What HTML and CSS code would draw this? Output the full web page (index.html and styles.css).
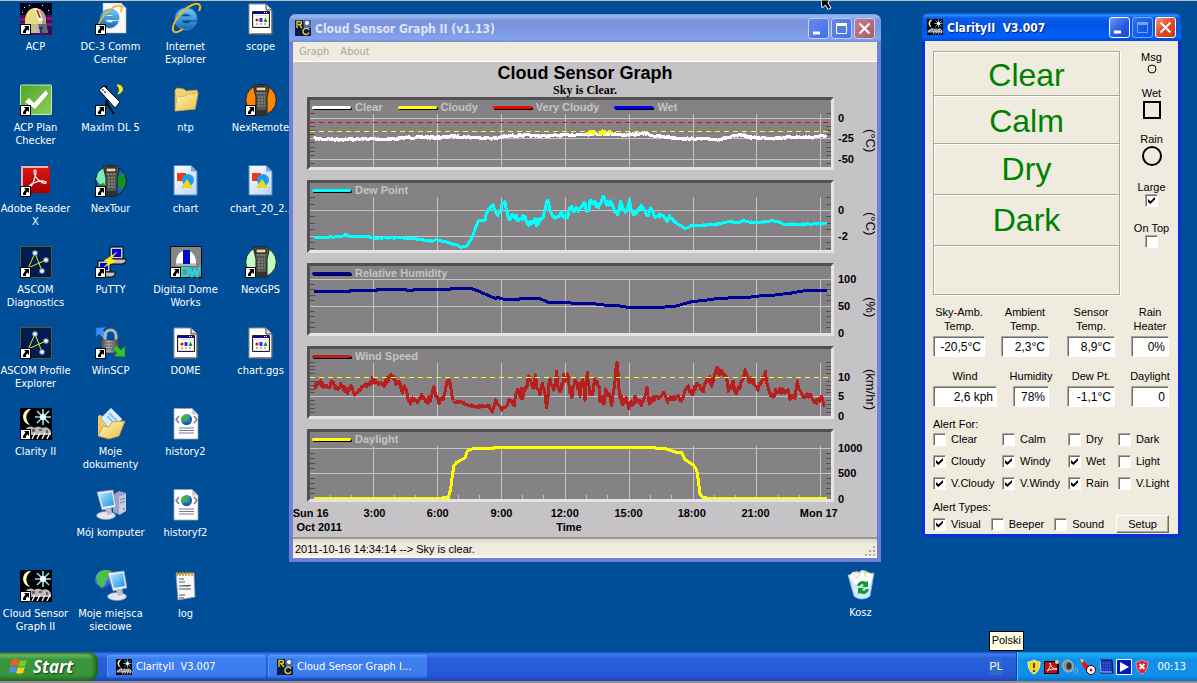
FILE: index.html
```html
<!DOCTYPE html>
<html lang="pl">
<head>
    <meta charset="UTF-8">
    <meta name="viewport" content="width=device-width, initial-scale=1.0">
    <title>Cloud Sensor Desktop</title>
    <link rel="stylesheet" href="styles.css">
</head>
<body>

<!-- Icon library -->
<svg class="defs" width="0" height="0" aria-hidden="true">
    <defs>
        <linearGradient id="gGreen" x1="0" y1="0" x2="1" y2="1"><stop offset="0" stop-color="#4ea52c"/><stop offset="1" stop-color="#8fcf5a"/></linearGradient>
        <linearGradient id="gRed" x1="0" y1="0" x2="0" y2="1"><stop offset="0" stop-color="#e01818"/><stop offset="1" stop-color="#a80000"/></linearGradient>
        <linearGradient id="gFolder" x1="0" y1="0" x2="1" y2="1"><stop offset="0" stop-color="#fff6b8"/><stop offset="1" stop-color="#e8bf48"/></linearGradient>
        <linearGradient id="gPage" x1="0" y1="0" x2="1" y2="1"><stop offset="0" stop-color="#ffffff"/><stop offset="1" stop-color="#b8d4f8"/></linearGradient>
        <linearGradient id="gScreen" x1="0" y1="0" x2="1" y2="1"><stop offset="0" stop-color="#b8ecff"/><stop offset="1" stop-color="#1c8ee8"/></linearGradient>
        <linearGradient id="gSteel" x1="0" y1="0" x2="1" y2="0"><stop offset="0" stop-color="#444"/><stop offset=".4" stop-color="#aaa"/><stop offset="1" stop-color="#444"/></linearGradient>
        <radialGradient id="gGlobe" cx=".35" cy=".3" r=".8"><stop offset="0" stop-color="#9fe0ff"/><stop offset=".5" stop-color="#2a78e0"/><stop offset="1" stop-color="#0a2a90"/></radialGradient>
        <linearGradient id="gIe" x1="0" y1="0" x2="0" y2="1"><stop offset="0" stop-color="#6fd0f8"/><stop offset="1" stop-color="#1464b8"/></linearGradient>
    </defs>

    <symbol id="arrow" viewBox="0 0 11 11">
        <rect x=".5" y=".5" width="10" height="10" fill="#fff" stroke="#000"/>
        <path d="M4 2h5v5L7.500 5.500 6 7v2H3V7l2.500-3.500z" fill="#000"/>
    </symbol>
    <symbol id="acp" viewBox="0 0 32 32">
        <path fill="#000018" d="M0 0h32v32H0z"/><path fill="#4a1060" d="M0 12h32v9H0z"/><path fill="#8c1868" d="M0 15h5v3H0zM27 14h5v3h-5zM0 20h7v3H0zM25 20h7v3h-7z"/>
        <path fill="#18186a" d="M0 23h32v5H0z"/><path fill="#500848" d="M0 28h32v4H0z"/>
        <path d="M5 18C5 9 10 5 15 5s11 4 11 13v3H5z" fill="#e8dc80"/><path d="M19 6c5 2 7 6 7 15h-4c0-7-1-11-3-15z" fill="#a8a49c"/>
        <path d="M14 5l4 1 5 11-4 2z" fill="#fff"/><path d="M16 7h2l3 8h-2z" fill="#e02020"/>
        <path d="M7 21h19l2 9H8z" fill="#c8bc94"/><path d="M18 21h8l2 9h-8z" fill="#6c6870"/><path d="M19 24h4v2h-1v5h-2v-5h-1z" fill="#2030a0"/>
        <path fill="#fff" d="M4 4h1v1H4zM9 2h1v1H9zM22 2h1v1h-1zM28 7h1v1h-1zM2 9h1v1H2z"/>
    </symbol>
    <symbol id="ie" viewBox="0 0 32 32">
        <path d="M16 5a11 11 0 1 0 10.500 14h-6a5.500 5.500 0 0 1-9.500-2h16C27.500 9 22 5 16 5zm-5 8.500C12 10 20 10 21 13.500z" fill="url(#gIe)" stroke="#3a8cd0" stroke-width="1"/>
        <path d="M5 29C-2 27 9 8 22 2c7-3 10 0 7 6" fill="none" stroke="#f2b624" stroke-width="2"/>
        <path d="M5 29c2 1 5-1 8-3" fill="none" stroke="#f2b624" stroke-width="2"/>
    </symbol>
    <symbol id="ie-page" viewBox="0 0 32 32">
        <path d="M8 0h18l5 5v25H8z" fill="#f8f8f8" stroke="#b0b8c4" stroke-width=".6"/><path d="M26 0v5h5z" fill="#c8d0dc"/>
        <g transform="translate(1 2) scale(.85)"><use href="#ie" width="32" height="32"/></g>
    </symbol>
    <symbol id="config" viewBox="0 0 32 32">
        <path d="M4 1h17l6 6v24H4z" fill="#fff" stroke="#8c8c94"/><path d="M21 1v6h6" fill="#dde" stroke="#444"/><path d="M27 7v24H5" fill="none" stroke="#555"/>
        <path d="M7.500 8.500h17v16h-17z" fill="#fff" stroke="#222"/><path fill="#e4e0d4" d="M8 12h16v12H8z"/><path fill="#fff" d="M9 13h14v10H9z"/><path fill="#0a0a8c" d="M8 9h16v2H8z"/><path fill="#fff" d="M19 9h1v1h-1zM21 9h1v1h-1z"/>
        <circle cx="12" cy="17" r="1.600" fill="#d81818"/><path d="M14.500 15h3v4h-3z" fill="#2038c8"/><path d="M20.500 14.500l2 4.500h-4z" fill="#18902c"/><path d="M11 21h2M15 21h2M19 21h2" stroke="#666"/>
    </symbol>
    <symbol id="check" viewBox="0 0 32 32">
        <rect x=".5" y="1" width="31" height="29.500" rx="1" fill="url(#gGreen)" stroke="#c8eaa8"/>
        <path d="M5 18l4-4 5 5L26 6l2 4-13 15z" fill="#fff"/>
    </symbol>
    <symbol id="telescope" viewBox="0 0 32 32">
        <path d="M12 16l-1 5-5 5M11 18l8 12M12 2l-4 4" stroke="#000" stroke-width="2" fill="none"/>
        <path d="M4 6l5-4 16 16-5 6z" fill="#fff" stroke="#000" stroke-width="1"/><path d="M7 6h2M9 8h2" stroke="#000"/>
        <path d="M22 1c6-1 8 7 1 9 2-3 2-6-1-9z" fill="#ffee00" stroke="#ffee00"/>
    </symbol>
    <symbol id="folder" viewBox="0 0 32 32">
        <path d="M5 27V6l2-2 7 1 2 2 11-1 1 3-3 16z" fill="#f2d370" stroke="#b8963c" stroke-width=".8"/>
        <path d="M5 27l2-14 9-1 2-2 10-1-3 16z" fill="url(#gFolder)" stroke="#c8a040" stroke-width=".6"/>
    </symbol>
    <symbol id="handset" viewBox="0 0 32 32">
        <path d="M9 1h14l1 4-2 8v18H11V13L9 5z" fill="#555850" stroke="#1c1c1c"/>
        <path d="M11 3h10v4H11z" fill="#e8d0a8" stroke="#111"/><path d="M12 9h2M15 9h2M18 9h2M13 13h2M16 13h2M19 13h1M13 16h2M16 16h2M19 16h1M13 19h2M16 19h2M19 19h1M13 22h2M16 22h2M19 22h1" stroke="#a4a8a0" stroke-width="1"/><path d="M11 26h11v5H11z" fill="#30322e"/>
    </symbol>
    <symbol id="nexremote" viewBox="0 0 32 32"><circle cx="16" cy="16" r="15.300" fill="#ff8400" stroke="#20242c"/><use href="#handset" width="32" height="32"/></symbol>
    <symbol id="nexgps" viewBox="0 0 32 32"><circle cx="16" cy="16" r="15.300" fill="#c4fac4" stroke="#203020"/><use href="#handset" width="32" height="32"/></symbol>
    <symbol id="nextour" viewBox="0 0 32 32">
        <circle cx="16" cy="16" r="15.300" fill="#2058e0" stroke="#082020"/><path d="M3 8c4-6 16-8 21-5l-5 8-6 13-8-4-4-6z" fill="#7cecb0"/><path d="M9 2l8-1 6 3-4 5-8-1zM23 10l6-2 2 9-4 9-5-7zM3 20l6-2 3 8-3 2z" fill="#0c9420"/>
        <use href="#handset" width="32" height="32"/>
    </symbol>
    <symbol id="acrobat" viewBox="0 0 32 32">
        <path d="M1 1h29v27H1z" fill="url(#gRed)"/><path d="M1 1h27v2H3v24H1z" fill="#f0b0b0"/>
        <path d="M15 5c2 0 1 4 0 7-1 4-3 9-5 10-2 0 0-3 4-4 4-2 9-3 12-1 1 2-3 2-6-1-3-2-6-6-6-9 0-1 0-2 1-2z" fill="none" stroke="#fff" stroke-width="1.200"/>
    </symbol>
    <symbol id="shapes" viewBox="0 0 32 32">
        <path d="M4 .5h17l6 6V30H4z" fill="url(#gPage)" stroke="#5c84bc"/><path d="M21 .5v6h6z" fill="#78a8e0"/>
        <path d="M7 8h9v8H7z" fill="#f03818"/><circle cx="18" cy="15" r="6" fill="#1c9cf0"/><path d="M17 14l6 9H11z" fill="#e8d820"/>
    </symbol>
    <symbol id="ascom" viewBox="0 0 32 32">
        <path d="M.5.5h31v31H.500z" fill="#001c50" stroke="#5c5818"/><path d="M15 7L7 25M15 7l7 18M26 14L8 22" stroke="#f0e818" stroke-width="1"/>
        <g fill="#7890c0"><circle cx="15" cy="7" r="2.800"/><circle cx="26" cy="14" r="2.800"/><circle cx="22" cy="25" r="2.800"/></g><g fill="#fff"><circle cx="15" cy="7" r="1.800"/><circle cx="26" cy="14" r="1.800"/><circle cx="22" cy="25" r="1.800"/></g>
    </symbol>
    <symbol id="putty" viewBox="0 0 32 32">
        <path d="M15 1h13v12H15z" fill="#d0d0d0" stroke="#000"/><path d="M17 3h9v8h-9z" fill="#0000d8"/><path d="M13 15l4-2h14v3l-4 2H13z" fill="#c0c0c0" stroke="#000"/>
        <path d="M3 15h12v11H3z" fill="#d0d0d0" stroke="#000"/><path d="M5 17h8v7H5z" fill="#0000d8"/><path d="M4 28l4-2h12v3l-3 2H4z" fill="#c0c0c0" stroke="#000"/>
        <path d="M22 6L9 15l5 1-5 5 12-6-5-2z" fill="#ffee00" stroke="#ffee00" stroke-width=".5"/>
    </symbol>
    <symbol id="ddw" viewBox="0 0 32 32">
        <path d="M.5.5h31v31H.500z" fill="#868686" stroke="#111"/><path d="M6 18C5 0 27 0 26 18z" fill="#fff"/><path d="M13 4h7v14h-7z" fill="#0008d0"/><path d="M5 18h22v2H5z" fill="#ddd" stroke="#333" stroke-width=".5"/>
        <path d="M12 22v8h3c5 0 5-8 0-8zM20 21l2 9 3-7 2 7 3-9" fill="none" stroke="#00e8f0" stroke-width="1.800"/>
    </symbol>
    <symbol id="winscp" viewBox="0 0 32 32">
        <path d="M1 1l10-1-3 3 5 5-4 4-5-5-3 3z" fill="#3c90f8" stroke="#1c58c0" stroke-width=".6"/>
        <path d="M10 14V9c0-8 11-8 11 0v5" fill="none" stroke="#b4b4b4" stroke-width="3"/><path d="M6 13h18v11l-3 2H9l-3-2z" fill="url(#gSteel)" stroke="#333" stroke-width=".6"/><path d="M8 16h14M8 19h14M8 22h14" stroke="#555" stroke-width=".7"/>
        <path d="M30 30l-11-1 3-3-4-4 3-4 5 5 4-4z" fill="#38c030" stroke="#148018" stroke-width=".6"/>
    </symbol>
    <symbol id="clarity" viewBox="0 0 32 32">
        <path d="M0 0h32v32H0z" fill="#000"/><path d="M9 1C1 3 1 15 10 17 5 12 5 6 11 1z" fill="#fff8c0"/>
        <path d="M23 1v16M15 9h16M17 3l12 12M29 3L17 15" stroke="#90dcf4" stroke-width="1.600"/><circle cx="23" cy="9" r="3" fill="#fff"/>
        <path d="M1 27c0-5 3-5 5-6 2-3 6-3 8-1 3-2 6-1 8 0 4-2 8 0 9 4v3z" fill="#b8b8b8"/><path d="M12 21h3v3h-3zM19 21h3v2h-3zM7 23h3v2H7zM26 22h2v3h-2z" fill="#666"/>
        <path d="M15 25l-3 6M20 25l-3 6M25 25l-3 6M30 25l-3 6" stroke="#fff" stroke-width="1.300"/>
    </symbol>
    <symbol id="docs" viewBox="0 0 32 32">
        <path d="M3 28V8l2-1 5 2 16 8-2 11z" fill="#f0c860"/><path d="M6 10L16 0l11 11-10 13z" fill="#d8f0ff" stroke="#78b0e0" stroke-width=".8"/><path d="M12 8l8 8M14 5l9 9" stroke="#8cc4f0" stroke-width="2"/>
        <path d="M3 28l5-10 6 1 3-5 13-1-6 15-10 3z" fill="url(#gFolder)" stroke="#c8942c" stroke-width=".8"/>
    </symbol>
    <symbol id="html" viewBox="0 0 32 32">
        <path d="M4 .5h18l6 6V31H4z" fill="#fff" stroke="#a0a0a8" stroke-width=".8"/><path d="M22 .5v6h6z" fill="#ccd"/>
        <path d="M9 8l-3 3.500L9 15M24 8l3 3.500-3 3.500" fill="none" stroke="#777" stroke-width="1.300"/><circle cx="16.500" cy="11.500" r="5.500" fill="url(#gGlobe)"/><path d="M13 8l4-2 2 3-2 3-3 1-1 2-2-4zM19 13l2-1-2 4z" fill="#3cb43c"/>
        <path d="M9 20h15M9 22.500h15M9 25h15" stroke="#76769c" stroke-width="1.200"/>
    </symbol>
    <symbol id="monitor" viewBox="0 0 32 32">
        <path d="M2 3l16-2 3 17-14 3z" fill="#f0f0f8" stroke="#8890b0" stroke-width=".7"/><path d="M4 5l13-2 2 13-11 2z" fill="url(#gScreen)"/>
        <path d="M10 20l6-1 1 5h-6z" fill="#a8acc8"/><ellipse cx="11" cy="26.500" rx="9.500" ry="4" fill="#e4e4f0" stroke="#9094b0" stroke-width=".6"/><path d="M11 20l5-1 1 6-5 1z" fill="#b8bcd4"/>
    </symbol>
    <symbol id="computer" viewBox="0 0 32 32">
        <path d="M18 6l6-4 7 2v18l-6 4-7-3z" fill="#9ca4cc"/><path d="M24 8l7-3v17l-7 3z" fill="#c8cce4"/><path d="M25 11l5-2M25 14l5-2" stroke="#6c74a4"/><circle cx="29" cy="20" r="1" fill="#38c838"/>
        <use href="#monitor" width="32" height="32"/>
    </symbol>
    <symbol id="network" viewBox="0 0 32 32">
        <circle cx="10" cy="10" r="10" fill="url(#gGlobe)"/><path d="M2 6c4-7 12-7 15-4l-4 6-4 1 2 5-4 4-5-5z" fill="#50c040"/>
        <g transform="translate(11 0)"><use href="#monitor" width="32" height="32"/></g>
    </symbol>
    <symbol id="notepad" viewBox="0 0 32 32">
        <path d="M6 4l18-1 1 24-17 3z" fill="#f8f8fc" stroke="#90949c" stroke-width=".8"/><path d="M7 2v4M10 2v4M13 2v4M16 2v4M19 2v4M22 2v4" stroke="#c89418" stroke-width="1.600"/>
        <path d="M9 9h5M9 12h6M9 16h10l2-1M9 19h12M9 25h6M9 28h5" stroke="#555" stroke-width="1"/>
    </symbol>
    <symbol id="bin" viewBox="0 0 32 32">
        <path d="M3 6l26-2-4 23c-4 4-12 4-16 0z" fill="#d4eafc" stroke="#88b8dc" stroke-width=".8"/><path d="M4 7l4-4 5 1 4-3 8 3 3 2-3 9-14 1z" fill="#fff"/><path d="M7 3l5 6 6-8 3 7" fill="none" stroke="#c8d0dc"/><path d="M8 3l5-1 1 3zM20 1l4 3-5 1z" fill="#f0d878"/>
        <path d="M12 17c1-5 6-6 9-4l2-1v6h-6l2-2c-2-1-3-1-4 1zM24 20c-1 5-6 6-9 4l-2 1v-6h6l-2 2c2 1 3 1 4-1z" fill="#109c28"/>
    </symbol>
    <symbol id="rc" viewBox="0 0 16 16">
        <path d="M0 0h16v16H0z" fill="#081c48"/><path d="M8 0h8v8H9z" fill="#486ca8"/><circle cx="12" cy="3" r="2" fill="#fff"/>
        <path d="M2 8V1.500h3c2 0 2 3 0 3H3M4.500 5L7 8" fill="none" stroke="#f0c820" stroke-width="1.400"/><path d="M14 10c-1-3-6-2-6 1.500s5 4 6 1" fill="none" stroke="#f0c820" stroke-width="1.400"/>
    </symbol>
    <symbol id="flag" viewBox="0 0 20 18">
        <path d="M3 2c3-2 5-1 7 0L8 8C6 7 4 7 1 8z" fill="#f05c28"/><path d="M11 2c2 1 4 1 7 0l-2 6c-3 1-5 1-7 0z" fill="#78c828"/><path d="M1 9c3-1 5-1 7 0l-2 6c-2-1-4-1-6 0z" fill="#4890f0"/><path d="M9 9c2 1 4 1 7 0l-2 6c-3 1-5 1-7 0z" fill="#f8cc28"/>
    </symbol>
    <symbol id="shield-warn" viewBox="0 0 16 16"><path d="M8 1c2 1 4 2 6 2 0 6-2 10-6 12C4 13 2 9 2 3c2 0 4-1 6-2z" fill="#f4d428" stroke="#f8f0b0"/><path d="M8 4v5M8 11v2" stroke="#222" stroke-width="1.500"/></symbol>
    <symbol id="shield-err" viewBox="0 0 16 16"><path d="M8 1c2 1 4 2 6 2 0 6-2 10-6 12C4 13 2 9 2 3c2 0 4-1 6-2z" fill="#d82030" stroke="#d8a0a8"/><path d="M5.500 5l5 5m0-5l-5 5" stroke="#fff" stroke-width="2"/></symbol>
    <symbol id="updater" viewBox="0 0 16 16"><path d="M0 2h15v13H0z" fill="#1c0000"/><path d="M1 3h12v11H1z" fill="#c01010"/><path d="M3 12c3-3 4-6 3-8 1 4 3 6 7 6-4 0-7 0-10 2z" fill="none" stroke="#fff"/><circle cx="13" cy="3" r="2" fill="#f0c8a0"/></symbol>
    <symbol id="speaker" viewBox="0 0 16 16"><ellipse cx="6" cy="7" rx="5" ry="6" fill="#888c94" stroke="#bbb" transform="rotate(-20 6 7)"/><ellipse cx="7" cy="7" rx="2.500" ry="3.500" fill="#333"/><path d="M11 13c2-1 3-3 3-5M13 15c2-1 3-3 3-6" fill="none" stroke="#8cb4f0"/></symbol>
    <symbol id="pointer" viewBox="0 0 16 16"><path d="M0 0l10 7-5 4z" fill="#e01020"/><path d="M0 0l4 1-2 3z" fill="#f8e020"/><circle cx="11" cy="11" r="4.500" fill="#fff" stroke="#200"/><circle cx="11" cy="11" r="1.500" fill="#e01020"/></symbol>
    <symbol id="chip" viewBox="0 0 16 16"><path d="M2 1h12l1 13H3z" fill="#1838c0" stroke="#000c40"/><path d="M2 1l1 12h11" fill="none" stroke="#b0c8ff"/><path d="M5 4h7M5 7h7M5 10h7" stroke="#5878e8" stroke-dasharray="1 1"/></symbol>
    <symbol id="play" viewBox="0 0 16 16"><path d="M.5.5h15v15H.500z" fill="#0018c0" stroke="#fff"/><path d="M4 3l9 5-9 5z" fill="#fff"/></symbol>
</svg>

<main class="desktop">
    <div class="icons" id="icons"></div>

    <!-- Recycle bin -->
    <a class="icon bin" href="#kosz"><svg class="glyph"><use href="#bin"/></svg><span>Kosz</span></a>

    <!-- Cloud Sensor Graph window -->
    <section class="window inactive graph-window">
        <header class="titlebar">
            <svg class="small-icon"><use href="#rc"/></svg>
            <h1>Cloud Sensor Graph II (v1.13)</h1>
            <button class="win-btn" aria-label="Minimize"><svg viewBox="0 0 19 19"><path d="M4 14h7" stroke-width="3"/></svg></button>
            <button class="win-btn" aria-label="Maximize"><svg viewBox="0 0 19 19"><path d="M4.500 5h10v9.500h-10z"/><path d="M4 5.500h11" stroke-width="3"/></svg></button>
            <button class="win-btn close" aria-label="Close"><svg viewBox="0 0 19 19"><path d="M4.500 4.500l10 10m0-10l-10 10" stroke-width="2"/></svg></button>
        </header>
        <nav class="menu"><a href="#graph">Graph</a><a href="#about">About</a></nav>
        <div class="graph">
            <h2>Cloud Sensor Graph</h2>
            <p class="subtitle">Sky is Clear.</p>
            <div class="charts" id="charts"></div>
            <svg class="time-axis" id="timeAxis"></svg>
        </div>
        <footer class="status">
            <span>2011-10-16 14:34:14 --&gt; Sky is clear.</span>
            <svg class="grip" width="12" height="12"><path d="M8 0h2v2H8zM4 4h2v2H4zM8 4h2v2H8zM0 8h2v2H0zM4 8h2v2H4zM8 8h2v2H8z" fill="#b0a898"/></svg>
        </footer>
    </section>

    <!-- Clarity II window -->
    <section class="window clarity-window">
        <header class="titlebar">
            <svg class="small-icon"><use href="#clarity"/></svg>
            <h1>ClarityII&nbsp; V3.007</h1>
            <button class="win-btn" aria-label="Minimize"><svg viewBox="0 0 19 19"><path d="M4 14h7" stroke-width="3"/></svg></button>
            <button class="win-btn" aria-label="Maximize" disabled><svg viewBox="0 0 19 19"><path d="M4.500 5h10v9.500h-10z"/><path d="M4 5.500h11" stroke-width="3"/></svg></button>
            <button class="win-btn close" aria-label="Close"><svg viewBox="0 0 19 19"><path d="M4.500 4.500l10 10m0-10l-10 10" stroke-width="2"/></svg></button>
        </header>
        <div class="clarity">
            <div class="top">
                <ul class="conditions">
                    <li>Clear</li>
                    <li>Calm</li>
                    <li>Dry</li>
                    <li>Dark</li>
                    <li></li>
                </ul>
                <div class="lamps">
                    <div class="lamp">Msg<svg width="10" height="10"><circle cx="5" cy="5" r="4" stroke-width="1"/></svg></div>
                    <div class="lamp">Wet<svg width="20" height="20"><path d="M2 2h16v16H2z"/></svg></div>
                    <div class="lamp">Rain<svg width="20" height="20"><circle cx="10" cy="10" r="9"/></svg></div>
                    <label class="lamp">Large<input type="checkbox" checked></label>
                    <label class="lamp">On Top<input type="checkbox"></label>
                </div>
            </div>

            <div class="readings">
                <label class="w52">Sky-Amb.<br>Temp.<input type="text" value="-20,5°C" readonly></label>
                <label class="w48">Ambient<br>Temp.<input type="text" value="2,3°C" readonly></label>
                <label class="w48">Sensor<br>Temp.<input type="text" value="8,9°C" readonly></label>
                <label class="w38">Rain<br>Heater<input type="text" value="0%" readonly></label>
                <label class="w64">Wind<input type="text" value="2,6 kph" readonly></label>
                <label class="w36">Humidity<input type="text" value="78%" readonly></label>
                <label class="w48">Dew Pt.<input type="text" value="-1,1°C" readonly></label>
                <label class="w38">Daylight<input type="text" value="0" readonly></label>
            </div>

            <fieldset>
                <legend>Alert For:</legend>
                <div class="alerts">
                    <label><input type="checkbox">Clear</label>
                    <label><input type="checkbox">Calm</label>
                    <label><input type="checkbox">Dry</label>
                    <label><input type="checkbox">Dark</label>
                    <label><input type="checkbox" checked>Cloudy</label>
                    <label><input type="checkbox" checked>Windy</label>
                    <label><input type="checkbox" checked>Wet</label>
                    <label><input type="checkbox">Light</label>
                    <label><input type="checkbox" checked>V.Cloudy</label>
                    <label><input type="checkbox" checked>V.Windy</label>
                    <label><input type="checkbox" checked>Rain</label>
                    <label><input type="checkbox">V.Light</label>
                </div>
            </fieldset>

            <fieldset>
                <legend>Alert Types:</legend>
                <div class="types">
                    <label><input type="checkbox" checked>Visual</label>
                    <label><input type="checkbox">Beeper</label>
                    <label><input type="checkbox">Sound</label>
                    <button class="setup">Setup</button>
                </div>
            </fieldset>
        </div>
    </section>

    <div class="tooltip">Polski</div>
</main>

<footer class="taskbar">
    <button class="start"><svg width="20" height="18"><use href="#flag"/></svg>Start</button>
    <div class="tasks">
        <button class="task"><svg class="small-icon"><use href="#clarity"/></svg>ClarityII&nbsp; V3.007</button>
        <button class="task"><svg class="small-icon"><use href="#rc"/></svg>Cloud Sensor Graph I...</button>
    </div>
    <button class="lang">PL</button>
    <div class="tray">
        <svg class="small-icon"><use href="#shield-warn"/></svg>
        <svg class="small-icon"><use href="#updater"/></svg>
        <svg class="small-icon"><use href="#speaker"/></svg>
        <svg class="small-icon"><use href="#pointer"/></svg>
        <svg class="small-icon"><use href="#chip"/></svg>
        <svg class="small-icon"><use href="#play"/></svg>
        <svg class="small-icon"><use href="#shield-err"/></svg>
        <time>00:13</time>
    </div>
</footer>

<svg class="cursor" width="12" height="10" viewBox="0 0 12 10"><path d="M0 0h8.500L7 3l3 5-3 1.500L4.500 5 1 8z" fill="#000" stroke="#fff"/></svg>

<script src="script.js"></script>
</body>
</html>
```

FILE: styles.css
```css
* { margin: 0; padding: 0; box-sizing: border-box; }
body { display: flex; flex-direction: column; min-height: 100vh; background: #004e98; border-top: 1px solid #c0c0c0; border-bottom: 2px solid #919191; overflow: hidden; font: 11px/13px "DejaVu Sans Condensed", "DejaVu Sans", sans-serif; color: #000; }
button, input { font: inherit; color: inherit; }
a { color: inherit; text-decoration: none; }
.defs { position: absolute; }
.small-icon { width: 16px; height: 16px; flex: none; }
.cursor { position: absolute; left: 821px; top: 0; }

/* Desktop */
.desktop { flex: 1; position: relative; }
.icons { display: grid; grid-auto-flow: column; grid-template-rows: repeat(8, 81px); grid-auto-columns: 75px; justify-content: start; padding-top: 2px; margin-left: -2px; }
.icon { display: flex; flex-direction: column; align-items: center; gap: 5px; width: 75px; color: #fff; text-align: center; }
.icon.last-row { grid-row: 8; }
.icon.nowrap { white-space: nowrap; }
.glyph { width: 32px; height: 32px; flex: none; }
.bin { position: absolute; left: 823px; top: 568px; }
.tooltip { position: absolute; right: 173px; bottom: 1px; padding: 2px 2px 3px; border: 1px solid #000; background: #ffffe1; font: 11px/13px "Liberation Sans", Arial, sans-serif; }

/* Windows */
.window { position: absolute; border-radius: 7px 7px 0 0; background: #0831d9; padding: 0 3px 3px; }
.titlebar { display: flex; align-items: center; gap: 2px; height: 28px; margin: 0 -3px; padding: 0 5px; border-radius: 7px 7px 0 0; background: linear-gradient(#0a50d8, #2c8cff 8%, #0a5be8 18%, #0054e3 50%, #0062ff 85%, #0046d0); color: #fff; text-shadow: 1px 1px #0a1883; }
.titlebar h1 { flex: 1; padding: 1px 0 0 2px; font: bold 12px/16px "DejaVu Sans Condensed", "DejaVu Sans", sans-serif; white-space: nowrap; }
.win-btn { width: 21px; height: 21px; border: 1px solid #fff; border-radius: 3px; background: linear-gradient(135deg, #6c96f4, #2458e0 60%, #1c4cd0); }
.win-btn svg { display: block; width: 19px; height: 19px; fill: none; stroke: #fff; }
.win-btn:disabled { opacity: .45; }
.win-btn.close { background: linear-gradient(135deg, #f0987c, #e04c24 50%, #c43c10); }
.inactive { background: #7080d8; padding: 0 4px 4px; }
.inactive .titlebar { margin: 0 -4px; padding: 0 6px; background: linear-gradient(#7c98e0, #9cb8f0 8%, #7a94dc 22%, #7b97e0 55%, #84a4ec 88%, #7690d8); color: #dce4f8; text-shadow: none; }
.inactive .win-btn { border-color: #c0d0f8; background: linear-gradient(135deg, #6888e8, #4470e8); }
.inactive .win-btn.close { background: linear-gradient(135deg, #c08090, #b05860); }

/* Graph window */
.graph-window { left: 289px; top: 13px; width: 592px; }
.menu { display: flex; gap: 11px; height: 20px; padding: 3px 6px; background: #efebde; border-bottom: 1px solid #fff; color: #aca899; }
.graph { overflow: hidden; background: #c6c3c6; font-family: "Liberation Sans", Arial, sans-serif; font-weight: bold; }
.graph h2 { height: 22px; font-size: 18px; line-height: 22px; text-align: center; }
.subtitle { font-family: "Liberation Serif", "Times New Roman", serif; font-size: 12px; text-align: center; }
.charts { display: flex; flex-direction: column; gap: 10px; padding-left: 14px; }
.chart { display: flex; height: 73px; }
.panel { flex: 1; margin-right: 4px; border: 3px solid; border-color: #525052 #e6e3e6 #e6e3e6 #525052; background: #848284; }
.legend { display: flex; gap: 15px; height: 12px; padding: 2px 2px 0; color: #c6c3c6; line-height: 12px; white-space: nowrap; }
.key { display: flex; align-items: center; gap: 4px; }
.key i { width: 39px; height: 3px; border-radius: 2px; box-shadow: 1px 1px #000; }
.plot { display: block; width: 100%; height: 55px; fill: none; }
.plot path { vector-effect: non-scaling-stroke; }
.grid-line { stroke: #c6c3c6; stroke-width: 1px; shape-rendering: crispEdges; }
.tick { stroke: #525052; stroke-width: 1px; shape-rendering: crispEdges; }
.limit { stroke-width: 1px; stroke-dasharray: 5 4; shape-rendering: crispEdges; }
.series { stroke-width: 3px; stroke-linejoin: round; shape-rendering: crispEdges; }
.scale { width: 26px; height: 73px; overflow: visible; }
.unit { width: 13px; padding-top: 15px; writing-mode: vertical-rl; text-align: center; font-size: 13px; font-weight: normal; line-height: 13px; white-space: nowrap; }
.time-axis { display: block; width: 527px; height: 35px; margin-left: 14px; overflow: visible; text-anchor: middle; }
.status { display: flex; justify-content: space-between; align-items: center; height: 21px; padding: 1px 0 0 2px; border-top: 2px solid #9c9a90; background: linear-gradient(#dcd8c8, #efebde 30%, #efebde 80%, #fff); font: 11px/14px "Liberation Sans", Arial, sans-serif; }
.grip { align-self: flex-end; }

/* Clarity window */
.clarity-window { left: 922px; top: 12px; width: 259px; }
.clarity { padding: 10px 9px 1px 8px; background: #efebde; font-family: "Liberation Sans", Arial, sans-serif; }
.top { display: flex; }
.conditions { width: 187px; list-style: none; border: 1px solid #aca899; box-shadow: 1px 1px #fff, inset 1px 1px #fff; color: #008000; font-size: 32px; line-height: 51px; text-align: center; }
.conditions li { height: 51px; border-bottom: 1px solid #aca899; box-shadow: 0 1px #fff; }
.conditions li:first-child { height: 44px; line-height: 46px; }
.conditions li:nth-child(2) { height: 48px; }
.conditions li:last-child { height: 48px; border: 0; box-shadow: none; }
.lamps { flex: 1; display: flex; flex-direction: column; align-items: center; gap: 13px; margin-right: -14px; }
.lamp { display: flex; flex-direction: column; align-items: center; }
.lamp svg { fill: none; stroke: #000; stroke-width: 2px; }
.lamp:nth-child(4), .lamp:last-child { margin-top: 2px; }

input[type="checkbox"] { appearance: none; width: 13px; height: 13px; flex: none; background: #fff; border: 1px solid; border-color: #aca899 #fff #fff #aca899; box-shadow: inset 1px 1px #716f64; }
input[type="checkbox"]:checked::before { content: ""; display: block; width: 7px; height: 7px; margin: 2px; background: #000; clip-path: polygon(0 30%, 35% 62%, 100% 0, 100% 36%, 35% 100%, 0 70%); }

.readings { display: grid; grid-template-columns: 68px 66px 64px 38px; row-gap: 12px; margin-top: 10px; }
.readings label { display: flex; flex-direction: column; align-items: center; text-align: center; line-height: 14px; white-space: nowrap; }
.readings input { width: 100%; height: 21px; margin-top: 3px; padding: 0 3px; border: 1px solid; border-color: #aca899 #fff #fff #aca899; box-shadow: inset 1px 1px #716f64; background: #fff; font-size: 12px; text-align: right; }
.w64 { width: 64px; }
.w52 { width: 52px; }
.w48 { width: 48px; }
.w38 { width: 38px; }
.w36 { width: 36px; margin-left: 12px; }

fieldset { border: 0; margin-top: 11px; }
.alerts { display: grid; grid-template-columns: 69px 66px 50px 1fr; row-gap: 9px; margin-top: 2px; }
.alerts label, .types label { display: flex; align-items: center; gap: 5px; white-space: nowrap; }
.types { display: flex; gap: 10px; margin-top: 1px; }
.setup { width: 53px; height: 18px; margin-left: auto; border: 1px solid; border-color: #fff #716f64 #716f64 #fff; box-shadow: inset -1px -1px #aca899; background: #efebde; }

/* Taskbar */
.taskbar { display: flex; align-items: stretch; height: 29px; background: linear-gradient(#1f4cc8, #3c80f0 8%, #2a60dc 20%, #2458d8 80%, #1c48b4); color: #fff; }
.start { display: flex; align-items: center; gap: 4px; width: 98px; padding: 0 9px; border: 0; border-radius: 0 9px 9px 0; background: linear-gradient(#2c7c2c, #6cb86c 10%, #3c963c 25%, #389438 80%, #2a702a); box-shadow: inset -3px 0 4px #1c5c1c; font: italic bold 17px/20px "Open Sans", "Noto Sans", sans-serif; text-shadow: 1px 1px 2px #103810; }
.tasks { flex: 1; display: flex; gap: 2px; padding: 3px 0 3px 9px; }
.task { display: flex; align-items: center; gap: 4px; width: 159px; padding: 0 9px; border: 0; border-radius: 3px; background: linear-gradient(#5a94f8, #3c80f0 15%, #3c7cf0 85%, #2c68d8); box-shadow: inset 1px 1px #5c98f8; text-align: left; white-space: nowrap; }
.lang { align-self: center; width: 13px; height: 16px; margin-right: 14px; border: 0; background: #316ac5; font-family: "Liberation Sans", Arial, sans-serif; }
.tray { display: flex; align-items: center; gap: 2px; padding: 0 11px 0 9px; border-left: 1px solid #1038a0; background: linear-gradient(#1888e8, #18b0f8 8%, #1290e8 25%, #1090e8 80%, #0c70c8); box-shadow: inset 1px 0 #48c8ff; }
.tray time { padding-left: 5px; }
```

FILE: script.js
```js
const shortcuts = [
    { name: "ACP", icon: "acp", link: true },
    { name: "ACP Plan Checker", icon: "check", link: true },
    { name: "Adobe Reader X", icon: "acrobat", link: true },
    { name: "ASCOM Diagnostics", icon: "ascom", link: true },
    { name: "ASCOM Profile Explorer", icon: "ascom", link: true },
    { name: "Clarity II", icon: "clarity", link: true },
    { name: "Cloud Sensor Graph II", icon: "clarity", link: true, cls: "last-row" },
    { name: "DC-3 Comm Center", icon: "ie-page", link: true },
    { name: "MaxIm DL 5", icon: "telescope", link: true },
    { name: "NexTour", icon: "nextour", link: true },
    { name: "PuTTY", icon: "putty", link: true },
    { name: "WinSCP", icon: "winscp", link: true },
    { name: "Moje dokumenty", icon: "docs" },
    { name: "Mój komputer", icon: "computer" },
    { name: "Moje miejsca sieciowe", icon: "network" },
    { name: "Internet Explorer", icon: "ie" },
    { name: "ntp", icon: "folder" },
    { name: "chart", icon: "shapes" },
    { name: "Digital Dome Works", icon: "ddw", link: true },
    { name: "DOME", icon: "config" },
    { name: "history2", icon: "html" },
    { name: "historyf2", icon: "html" },
    { name: "log", icon: "notepad" },
    { name: "scope", icon: "config" },
    { name: "NexRemote", icon: "nexremote", link: true },
    { name: "chart_20_2..", icon: "shapes", cls: "nowrap" },
    { name: "NexGPS", icon: "nexgps", link: true },
    { name: "chart.ggs", icon: "config" }
];

document.getElementById("icons").innerHTML = shortcuts.map(s => `
    <a class="icon ${s.cls || ""}" href="#${s.icon}">
        <svg class="glyph" viewBox="0 0 32 32"><use href="#${s.icon}" width="32" height="32"/>${s.link ? '<use href="#arrow" y="21" width="11" height="11"/>' : ""}</svg>
        <span>${s.name}</span>
    </a>`).join("");

// Plot area is 1563 x 165 units, points are x,y pairs
const hours = [190, 382, 574, 766, 958, 1150, 1339, 1531];
const charts = [
    {
        unit: "(°C)",
        keys: [["Clear", "#fff"], ["Cloudy", "#ff0"], ["Very Cloudy", "#f00"], ["Wet", "#00f"]],
        lines: [19, 79, 142],
        ticks: [4, 43, 55, 67, 92, 105, 117, 130, 154],
        limits: [[31, "#f00"], [58, "#ff0"]],
        scale: [[21, "0"], [41, "-25"], [62, "-50"]],
        series: [
            { color: "#fff", noise: 3, points: "13,80 75,82 255,81 295,76 405,76 425,72 485,76 560,79 575,74 625,70 705,72 775,69 825,67 885,64 945,70 1005,64 1035,72 1125,80 1225,82 1295,69 1325,77 1385,79 1445,75 1505,76 1550,70" },
            { color: "#ff0", noise: 7, points: "830,66 855,62" },
            { color: "#ff0", noise: 7, points: "866,63 888,62" },
            { color: "#ff0", noise: 5, points: "896,61 908,64" }
        ]
    },
    {
        unit: "(°C)",
        keys: [["Dew Point", "#0ff"]],
        lines: [46, 124],
        ticks: [7, 28, 64, 85, 103, 142, 160],
        limits: [],
        scale: [[30, "0"], [56, "-2"]],
        series: [
            { color: "#0ff", noise: 1, points: "13,126 45,127 95,125 105,119 120,125 175,125 195,130 265,128 325,132 365,139 380,134 405,140 435,148 455,157 470,153 485,130 505,77 525,77" },
            { color: "#0ff", noise: 9, points: "525,77 535,50 550,32 560,63 573,38 585,22 595,70 610,58 625,70 645,65 657,90 670,78 680,85 703,55 712,12 722,58 737,75 750,55 760,65 773,70 780,40 805,45 825,30 833,55 840,25 855,18 865,43 880,10 895,30 905,22 923,62 932,25 945,48 958,25 970,55 1000,38 1012,68 1025,40 1035,62 1050,58 1068,80 1083,68" },
            { color: "#0ff", noise: 1, points: "1083,68 1100,85 1127,101 1145,92 1185,90 1225,87 1260,79 1280,84 1300,78 1340,84 1375,78 1400,78 1420,87 1475,88 1550,86" }
        ]
    },
    {
        unit: "(%)",
        keys: [["Relative Humidity", "#000094"]],
        lines: [4, 85],
        ticks: [19, 34, 51, 67, 100, 115, 133, 148],
        limits: [],
        scale: [[16, "100"], [43, "50"], [70, "0"]],
        series: [
            { color: "#000094", noise: 0, points: "13,42 25,40 120,40 122,37 200,37 203,34 285,34 290,37 310,37 313,35 420,34 423,31 485,32 500,37 525,48 555,61 565,59 585,65 625,64 635,61 690,62 715,73 775,73 795,78 825,76 875,79 885,82 930,84 965,90 1035,89 1095,85 1145,71 1185,67 1225,61 1315,58 1355,53 1395,51 1445,45 1485,38 1550,37" }
        ]
    },
    {
        unit: "(km/hr)",
        keys: [["Wind Speed", "#b82020"]],
        lines: [106],
        ticks: [4, 15, 25, 37, 61, 73, 85, 94, 118, 130, 142, 154],
        limits: [[49, "#ff0"]],
        scale: [[31, "10"], [50, "5"], [70, "0"]],
        series: [
            { color: "#b82020", noise: 10, points: "13,73 30,65 45,85 65,69 80,77 95,72 110,89 125,82 137,99 150,79 170,77 187,57 205,67 220,75 243,39 255,62 267,62 275,92 283,77 298,122 317,109 325,122 335,105 350,119 360,115 372,79 387,122 400,107 413,55 422,72 430,127" },
            { color: "#b82020", noise: 3, points: "430,127 450,122 470,132 505,137 537,135 547,152 557,119 575,145 593,132 597,112 610,129" },
            { color: "#b82020", noise: 18, points: "610,129 625,92 643,105 658,52 667,82 677,59 690,87 697,77 710,122 720,57 728,87 740,47 747,97 755,67 770,42 783,102 800,62 810,92 818,57 825,107 832,39 840,112 850,72 862,57 870,107 880,119 890,87 905,117 921,7 930,127 943,102 958,137" },
            { color: "#b82020", noise: 10, points: "958,137 975,112 1000,130 1011,82 1018,125 1035,109 1045,119 1060,92 1070,122 1095,112 1115,112 1135,77 1145,102 1160,72 1180,87 1197,47 1205,67 1222,12 1230,47 1235,32 1250,57 1255,87 1270,67 1277,89 1290,82 1305,32 1315,57 1330,62 1340,87 1355,62 1366,35 1372,72 1385,107 1400,87 1430,87 1443,115 1455,107 1462,69 1473,102 1495,102 1520,125 1535,107 1545,135" }
        ]
    },
    {
        unit: "",
        keys: [["Daylight", "#ff0"]],
        lines: [13, 88],
        ticks: [28, 43, 58, 73, 103, 118, 133, 148],
        hourTicks: [62, 125, 253, 316, 445, 508, 637, 700, 829, 892, 1021, 1084, 1213, 1276, 1405, 1468],
        limits: [],
        scale: [[19, "1000"], [44, "500"], [70, "0"]],
        series: [
            { color: "#ff0", noise: 0, points: "13,163 395,163 400,161 415,161 422,135 427,95 432,65 440,55 465,42 472,22 480,16 500,13 550,14 552,11 1035,11 1040,14 1070,15 1100,25 1115,25 1125,47 1150,63 1160,78 1165,110 1170,150 1180,161 1200,163 1550,163" }
        ]
    }
];

let seed = 7;
function random() {
    seed = (seed * 16807) % 2147483647;
    return seed / 2147483647 - 0.5;
}

// Joins the points and adds sensor noise between them
function tracePath(text, noise) {
    const points = text.split(" ").map(p => p.split(",").map(Number));
    let d = "M" + points[0];
    for (let i = 1; i < points.length; i++) {
        const [x0, y0] = points[i - 1];
        const [x1, y1] = points[i];
        const steps = noise ? Math.max(1, Math.round((x1 - x0) / 3)) : 1;
        for (let s = 1; s <= steps; s++) {
            const t = s / steps;
            const y = y0 + (y1 - y0) * t + random() * noise * 2;
            d += `L${(x0 + (x1 - x0) * t).toFixed(1)},${y.toFixed(1)}`;
        }
    }
    return d;
}

document.getElementById("charts").innerHTML = charts.map(c => `
    <div class="chart">
        <div class="panel">
            <div class="legend">${c.keys.map(k => `<span class="key"><i style="background:${k[1]}"></i>${k[0]}</span>`).join("")}</div>
            <svg class="plot" viewBox="0 0 1563 165" preserveAspectRatio="none">
                <path class="grid-line" d="${c.lines.map(y => `M0 ${y}H1563`).join("")}${hours.map(x => `M${x} 6V165`).join("")}${(c.hourTicks || []).map(x => `M${x} 153V165`).join("")}"/>
                <path class="tick" d="${c.ticks.map(y => `M0 ${y}H15M1548 ${y}H1563`).join("")}"/>
                ${c.series.map(s => `<path class="series" stroke="${s.color}" d="${tracePath(s.points, s.noise)}"/>`).join("")}
                ${c.limits.map(l => `<path class="limit" stroke="${l[1]}" d="M0 ${l[0]}H1563"/>`).join("")}
            </svg>
        </div>
        <svg class="scale">${c.scale.map(s => `<text y="${s[0] + 4}">${s[1]}</text>`).join("")}</svg>
        <div class="unit">${c.unit}</div>
    </div>`).join("");

const times = ["Sun 16", "3:00", "6:00", "9:00", "12:00", "15:00", "18:00", "21:00", "Mon 17"];
document.getElementById("timeAxis").innerHTML =
    times.map((t, i) => `<text x="${(0.7 + i * 12.05).toFixed(1)}%" y="15">${t}</text>`).join("") +
    '<text x="2.300%" y="29">Oct 2011</text><text x="49.700%" y="29">Time</text>';
```
